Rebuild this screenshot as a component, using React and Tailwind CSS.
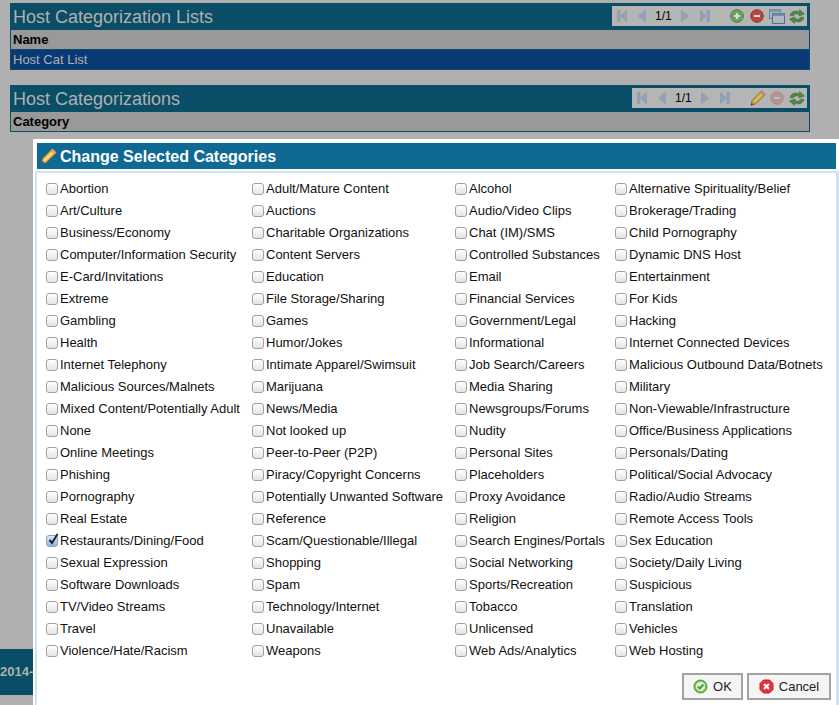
import React from 'react';

const CATEGORIES = [
  'Abortion', 'Adult/Mature Content', 'Alcohol', 'Alternative Spirituality/Belief',
  'Art/Culture', 'Auctions', 'Audio/Video Clips', 'Brokerage/Trading',
  'Business/Economy', 'Charitable Organizations', 'Chat (IM)/SMS', 'Child Pornography',
  'Computer/Information Security', 'Content Servers', 'Controlled Substances', 'Dynamic DNS Host',
  'E-Card/Invitations', 'Education', 'Email', 'Entertainment',
  'Extreme', 'File Storage/Sharing', 'Financial Services', 'For Kids',
  'Gambling', 'Games', 'Government/Legal', 'Hacking',
  'Health', 'Humor/Jokes', 'Informational', 'Internet Connected Devices',
  'Internet Telephony', 'Intimate Apparel/Swimsuit', 'Job Search/Careers', 'Malicious Outbound Data/Botnets',
  'Malicious Sources/Malnets', 'Marijuana', 'Media Sharing', 'Military',
  'Mixed Content/Potentially Adult', 'News/Media', 'Newsgroups/Forums', 'Non-Viewable/Infrastructure',
  'None', 'Not looked up', 'Nudity', 'Office/Business Applications',
  'Online Meetings', 'Peer-to-Peer (P2P)', 'Personal Sites', 'Personals/Dating',
  'Phishing', 'Piracy/Copyright Concerns', 'Placeholders', 'Political/Social Advocacy',
  'Pornography', 'Potentially Unwanted Software', 'Proxy Avoidance', 'Radio/Audio Streams',
  'Real Estate', 'Reference', 'Religion', 'Remote Access Tools',
  'Restaurants/Dining/Food', 'Scam/Questionable/Illegal', 'Search Engines/Portals', 'Sex Education',
  'Sexual Expression', 'Shopping', 'Social Networking', 'Society/Daily Living',
  'Software Downloads', 'Spam', 'Sports/Recreation', 'Suspicious',
  'TV/Video Streams', 'Technology/Internet', 'Tobacco', 'Translation',
  'Travel', 'Unavailable', 'Unlicensed', 'Vehicles',
  'Violence/Hate/Racism', 'Weapons', 'Web Ads/Analytics', 'Web Hosting',
];

const FirstLast = ({ flip }) => (
  <svg width="10" height="12" viewBox="0 0 10 12" className="shrink-0">
    <g fill="#93a3b6" stroke="#8598ae" strokeWidth="0.6" transform={flip ? 'matrix(-1 0 0 1 10 0)' : undefined}>
      <rect x="0.5" y="0.5" width="2.5" height="11" />
      <path d="M9.500.5v11L3.500 6z" />
    </g>
  </svg>
);

const PrevNext = ({ flip }) => (
  <svg width="8" height="12" viewBox="0 0 8 12" className="shrink-0">
    <path d="M7.500.5v11L.5 6z" fill="#93a3b6" stroke="#8598ae" strokeWidth="0.6" transform={flip ? 'matrix(-1 0 0 1 8 0)' : undefined} />
  </svg>
);

const Pager = () => (
  <div className="flex w-[118px] items-center pl-[5px]">
    <FirstLast />
    <div className="ml-[11px]"><PrevNext /></div>
    <span className="ml-[9px] w-[16px] whitespace-nowrap text-[12px] text-black">1/1</span>
    <div className="ml-[10px]"><PrevNext flip /></div>
    <div className="ml-[11px]"><FirstLast flip /></div>
  </div>
);

const RoundIcon = ({ color, edge, plus, dim }) => (
  <svg width="14" height="14" viewBox="0 0 14 14" className={`shrink-0 ${dim ? 'opacity-30' : ''}`}>
    <circle cx="7" cy="7" r="6.300" fill={color} stroke={edge} />
    <path d={plus ? 'M4 7h6M7 4v6' : 'M4 7h6'} stroke="#d8d8d8" strokeWidth="2" />
  </svg>
);

const WindowsIcon = () => (
  <svg width="16" height="15" viewBox="0 0 16 15" className="shrink-0">
    <rect x="0.5" y="0.5" width="11" height="9" fill="#a9b4c0" stroke="#5f7fa6" />
    <rect x="0.5" y="0.5" width="11" height="2.500" fill="#7f95b0" />
    <rect x="3.500" y="4.500" width="12" height="10" fill="#b0b6bc" stroke="#4d719f" />
    <rect x="3.500" y="4.500" width="12" height="2.500" fill="#6f8bad" />
  </svg>
);

const RefreshIcon = () => (
  <svg width="16" height="15" viewBox="0 0 16 15" className="shrink-0">
    <path d="M1 6.500C2 2 7.500 1 10.500 3.200V.5L15.500 5l-5.500 2V5.300C8 4.300 5 4.800 4.200 7z" fill="#4b8a45" stroke="#35642f" strokeWidth="0.5" />
    <path d="M15 8.500C14 13 8.500 14 5.500 11.800v2.700L.5 10l5.500-2v1.700c2 1 5 .5 5.800-1.700z" fill="#4b8a45" stroke="#35642f" strokeWidth="0.5" />
  </svg>
);

const PencilIcon = ({ dark }) => (
  <svg width="16" height="16" viewBox="0 0 16 16" className="shrink-0">
    <path d="M11.500.8 15.200 4.500 5.500 14 1 15.200 2 10.500z" fill={dark ? '#cfa94a' : '#f2c14e'} stroke={dark ? '#7d6024' : '#b07f25'} strokeWidth="0.8" />
    <path d="M11.500.8 15.200 4.500 13.300 6.400 9.600 2.700z" fill={dark ? '#c98a70' : '#f09a78'} />
    <path d="M3.500 11.500 11 4.200l1 1-7.500 7.300z" fill={dark ? '#e0c36a' : '#ffe08a'} />
    <path d="M2 10.500 1 15.200 5.500 14z" fill={dark ? '#b98f55' : '#e8c48c'} />
    <path d="M1.500 13 1 15.200 3.300 14.700z" fill="#4a3318" />
  </svg>
);

const Panel = ({ title, column, toolbar, children }) => (
  <div className="mx-[10px] w-[800px] border border-[#0a4d66] bg-[#999999]">
    <div className="flex h-[26px] items-center justify-between bg-[#0a4d66] pb-[2px] pl-[2px] pr-[2px]">
      <span className="mt-[2px] text-[18px] text-[#b0b0b0]">{title}</span>
      {toolbar}
    </div>
    <div className="flex h-[19px] items-center pl-[2px] text-[13px] font-bold text-black">{column}</div>
    {children}
  </div>
);

const Category = ({ name }) => {
  const checked = name === 'Restaurants/Dining/Food';
  return (
    <label className="relative flex h-[22px] items-center whitespace-nowrap text-[13px] text-[#111111]">
      <input
        type="checkbox"
        defaultChecked={checked}
        className={`mr-[2px] h-[12px] w-[12px] shrink-0 appearance-none rounded-[3px] border border-[#a0a0a0] bg-gradient-to-b ${checked ? 'from-[#dbe8f8] to-[#8fb6ea] border-[#6d86a8]' : 'from-white to-[#e4e4e4]'}`}
      />
      {checked && (
        <svg width="12" height="14" viewBox="0 0 12 14" className="absolute left-[1px] top-[2px]">
          <path d="M2.500 8l2.500 3L10.500 2" fill="none" stroke="#16263f" strokeWidth="2" />
        </svg>
      )}
      {name}
    </label>
  );
};

export default function App() {
  return (
    <div className="relative h-[705px] w-[839px] overflow-hidden bg-[#b0b0b0] pt-[3px] font-['Liberation_Sans',Arial,sans-serif]">
      <Panel
        title="Host Categorization Lists"
        column="Name"
        toolbar={
          <div className="flex h-[20px] w-[195px] items-center bg-[#b5b5b5]">
            <Pager />
            <RoundIcon color="#6fa35f" edge="#4d7d45" plus />
            <div className="ml-[6px]"><RoundIcon color="#b5483f" edge="#8f3a35" /></div>
            <div className="ml-[5px] flex"><WindowsIcon /></div>
            <div className="ml-[4px] flex"><RefreshIcon /></div>
          </div>
        }
      >
        <div className="flex h-[20px] items-center border-t border-[#0a4d66] bg-[#0a3a75] pl-[2px] text-[13px] text-[#b0b0b0]">Host Cat List</div>
      </Panel>

      <div className="mt-[15px]">
        <Panel
          title="Host Categorizations"
          column="Category"
          toolbar={
            <div className="flex h-[20px] w-[175px] items-center bg-[#b5b5b5]">
              <Pager />
              <PencilIcon dark />
              <div className="ml-[4px]"><RoundIcon color="#b5483f" edge="#8f3a35" dim /></div>
              <div className="ml-[5px] flex"><RefreshIcon /></div>
            </div>
          }
        />
      </div>

      <div className="absolute left-0 top-[649px] flex h-[46px] w-[60px] items-center whitespace-nowrap bg-[#0a4d66] text-[13px] font-bold text-[#b0b0b0]">2014-09</div>

      <div className="absolute left-[33px] top-[139px] h-[566px] w-[806px] bg-white pt-[4px]">
        <div className="ml-[4px] mr-[3px] flex h-[26px] items-center gap-[3px] bg-[#0e6a92] pl-[4px]">
          <PencilIcon />
          <span className="mt-[2px] text-[16px] font-bold text-white">Change Selected Categories</span>
        </div>
        <div className="ml-[2px] mt-[2px] h-[534px] border-l-2 border-r-[3px] border-t-2 border-[#cfe3f1] pl-[9px] pt-[5px]">
          <div className="grid grid-cols-[206px_203px_160px_auto]">
            {CATEGORIES.map((name) => <Category key={name} name={name} />)}
          </div>
          <div className="mt-[11px] flex justify-end gap-[4px] pr-[5px]">
            <button className="flex h-[27px] w-[61px] items-center justify-center gap-[5px] border-2 border-[#a3a3a3] bg-[#f5f5f5] text-[13px] text-[#222222]">
              <svg width="15" height="15" viewBox="0 0 15 15">
                <circle cx="7.500" cy="7.500" r="6.500" fill="#7cc25a" stroke="#4e9a3a" />
                <circle cx="7.500" cy="7.500" r="4.500" fill="#e6f3dc" />
                <path d="M4.800 7.500l2 2 3.500-4" fill="none" stroke="#4e9a3a" strokeWidth="2" />
              </svg>
              OK
            </button>
            <button className="flex h-[27px] w-[84px] items-center justify-center gap-[5px] border-2 border-[#a3a3a3] bg-[#f5f5f5] text-[13px] text-[#222222]">
              <svg width="15" height="15" viewBox="0 0 15 15">
                <path d="M4.500 1h6L14 4.500v6L10.500 14h-6L1 10.500v-6z" fill="#e6303a" stroke="#c01f28" />
                <path d="M5 5l5 5M10 5l-5 5" stroke="#fff" strokeWidth="2.200" />
              </svg>
              Cancel
            </button>
          </div>
        </div>
      </div>
    </div>
  );
}
